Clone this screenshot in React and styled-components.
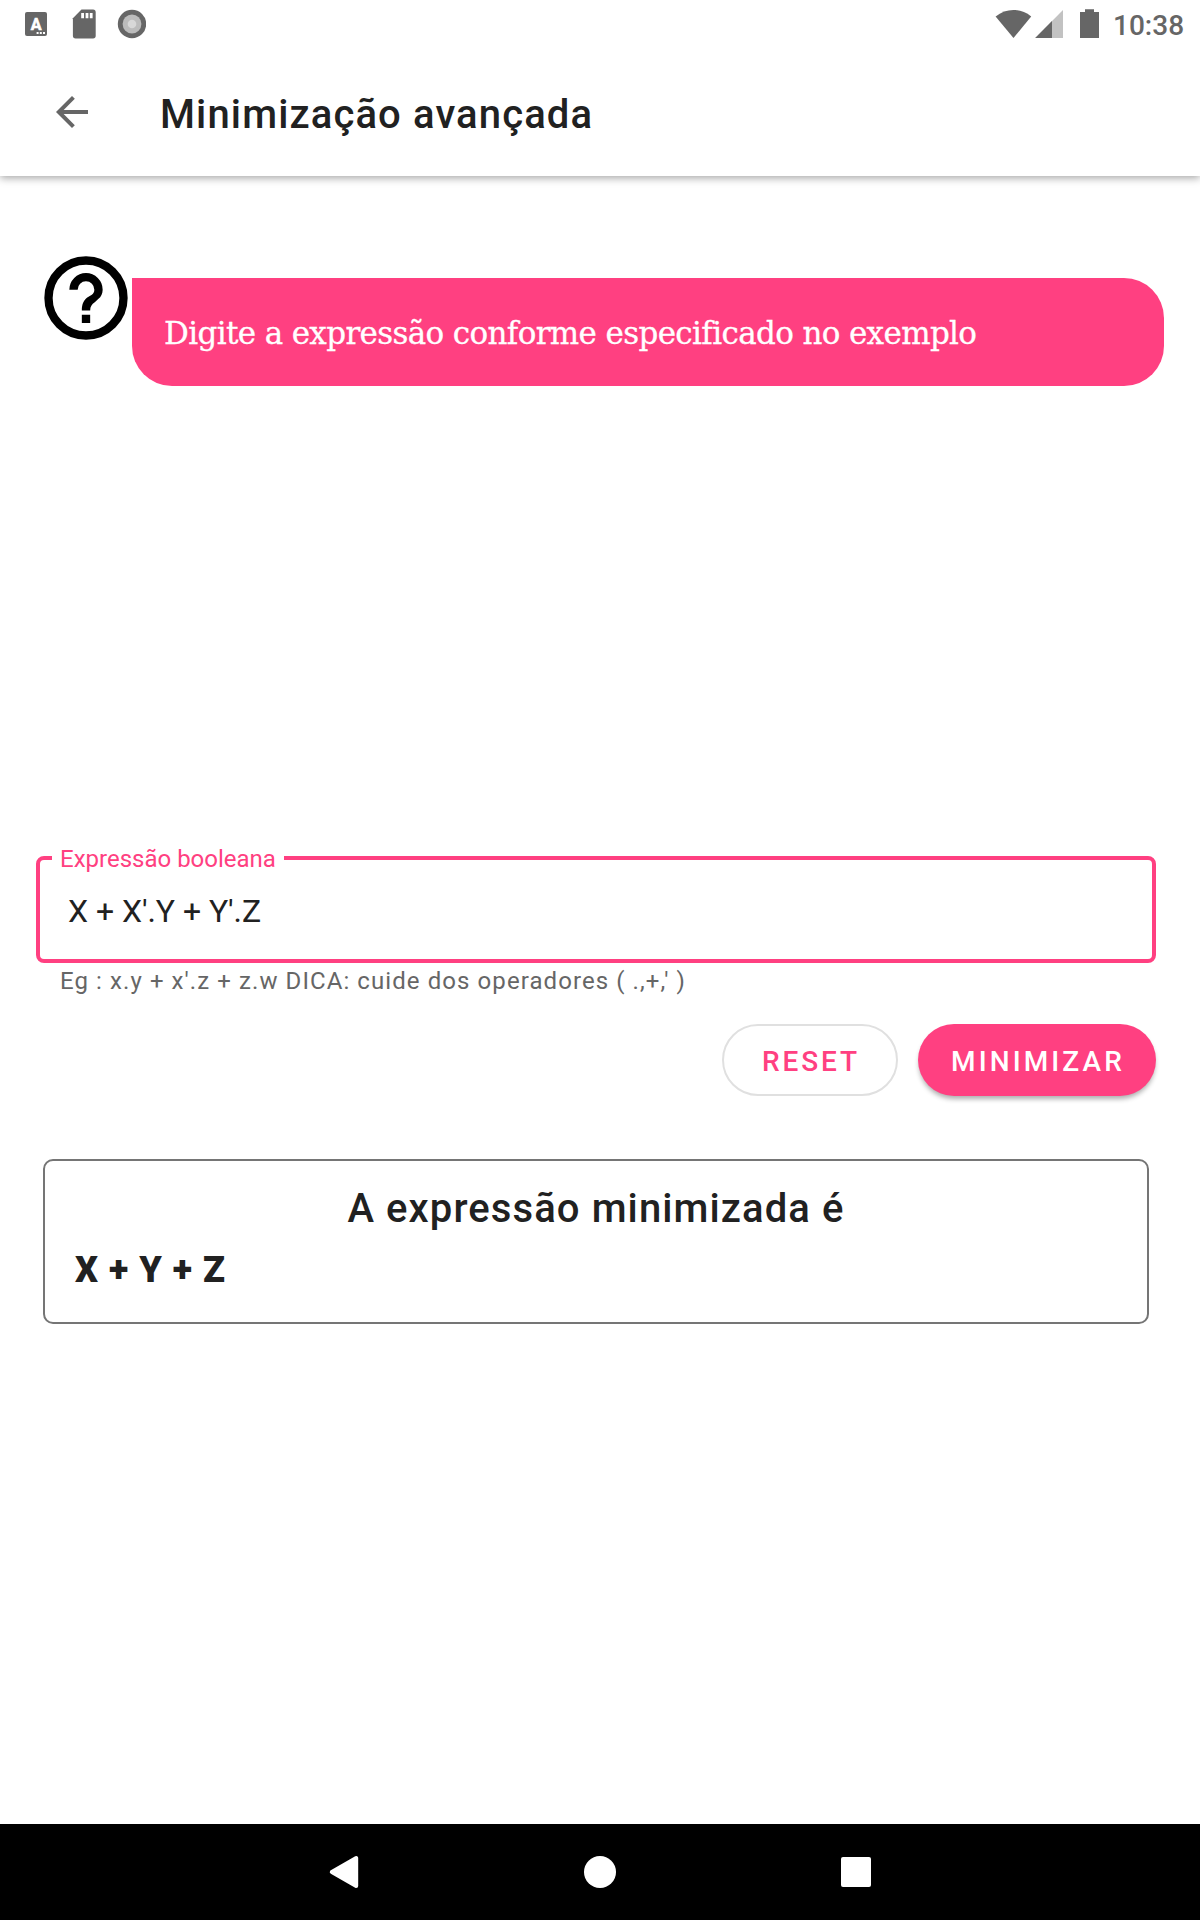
import React from "react";
import styled, { createGlobalStyle } from "styled-components";
import { MdArrowBack } from "react-icons/md";

function App() {
  return (
    <Screen>
      <GlobalStyle />
      <StatusBar />
      <Toolbar>
        <BackIcon />
        <Title>Minimização avançada</Title>
      </Toolbar>
      <Content>
        <HintRow>
          <HelpIcon viewBox="0 0 24 24">
            <circle cx="12" cy="12" r="9" fill="none" stroke="#000" strokeWidth="2" />
            <path d="M11 16h2v2h-2zM16 10c0 .9-.4 1.7-1 2.2l-.9.8c-.7.5-1.1 1-1.1 2h-2c0-1.600.5-2.500 1.300-3.100l1.100-.7c.4-.3.6-.7.6-1.200a2 2 0 0 0-4 0H8a4 4 0 0 1 8 0z" />
          </HelpIcon>
          <Bubble>
            <BubbleText>Digite a expressão conforme especificado no exemplo</BubbleText>
          </Bubble>
        </HintRow>
        <Field>
          <Label>Expressão booleana</Label>
          <Value>X + X'.Y + Y'.Z</Value>
        </Field>
        <Helper>Eg : x.y + x'.z + z.w DICA: cuide dos operadores ( .,+,' )</Helper>
        <Actions>
          <Button $width={176}>RESET</Button>
          <Button $width={238} $primary>
            MINIMIZAR
          </Button>
        </Actions>
        <ResultCard>
          <ResultTitle>A expressão minimizada é</ResultTitle>
          <Result>X + Y + Z</Result>
        </ResultCard>
      </Content>
      <NavBar>
        <svg width="32" height="36" viewBox="0 0 32 36">
          <path
            d="M28.2 4v28L3.8 18z"
            fill="#fff"
            stroke="#fff"
            strokeWidth="4"
            strokeLinejoin="round"
          />
        </svg>
        <svg width="32" height="32" viewBox="0 0 32 32">
          <circle cx="16" cy="16" r="16" fill="#fff" />
        </svg>
        <svg width="32" height="32" viewBox="0 0 32 32">
          <rect x="1" y="1" width="30" height="30" rx="2" fill="#fff" />
        </svg>
      </NavBar>
    </Screen>
  );
}

function StatusBar() {
  return (
    <Status>
      <svg width="122" height="48" viewBox="0 0 122 48" fill="#666">
        <rect x="1" y="12" width="22" height="24" rx="2" />
        <text
          x="12"
          y="29.6"
          fontSize="16"
          fontWeight="700"
          textAnchor="middle"
          fill="#fff"
          stroke="#fff"
          strokeWidth="0.6"
        >
          A
        </text>
        <path d="M12.6 32h2v2h-2zM15.8 32h2v2h-2zM19 32h2v2h-2z" fill="#fff" />
        <path d="M57.5 9.5H69a2.7 2.7 0 0 1 2.7 2.7v23.6a2.7 2.7 0 0 1-2.7 2.7H51.6a2.7 2.7 0 0 1-2.7-2.7V18.2z" />
        <path d="M57.2 13h2.8v5.2h-2.8zM61.6 13h2.8v5.2h-2.8zM65.8 13h2.8v5.2h-2.8z" fill="#fff" />
        <circle cx="108" cy="24" r="14.2" />
        <circle cx="108" cy="24" r="9.4" fill="#bcbcbc" />
        <circle cx="108" cy="24" r="4.3" fill="#d8d8d8" />
      </svg>
      <StatusRight>
        <svg width="106" height="48" viewBox="0 0 106 48" fill="#666">
          <path d="M1.6 16.4C7 12.2 13 10 19.4 10s12.4 2.2 17.8 6.4L19.5 38z" />
          <path d="M69 10v28H41.2z" fill="#c2c2c2" />
          <path d="M58 21.1V38H41.2z" />
          <path d="M91 9.2h9V12h5v26H86V12h5z" />
        </svg>
        <Clock>10:38</Clock>
      </StatusRight>
    </Status>
  );
}

const pink = "#ff4081";

const GlobalStyle = createGlobalStyle`
  * {
    box-sizing: border-box;
  }
  body {
    margin: 0;
    background: #fff;
    font-family: Roboto, sans-serif;
    color: #212121;
  }
  svg {
    display: block;
    flex: none;
  }
`;

const Screen = styled.div`
  display: flex;
  flex-direction: column;
  width: 1200px;
  height: 1920px;
  overflow: hidden;
`;

const Status = styled.div`
  display: flex;
  justify-content: space-between;
  height: 48px;
  padding: 0 17px 0 24px;
`;

const StatusRight = styled.div`
  display: flex;
  gap: 13px;
`;

const Clock = styled.span`
  width: 70px;
  padding-top: 1px;
  font-size: 28px;
  font-weight: 500;
  line-height: 49px;
  white-space: nowrap;
  color: #666;
`;

const Toolbar = styled.header`
  display: flex;
  align-items: center;
  height: 128px;
  padding-left: 48px;
  box-shadow: 0 2px 8px rgba(0, 0, 0, 0.36);
  clip-path: inset(0 0 -12px 0); // shadow only below the bar
`;

const BackIcon = styled(MdArrowBack)`
  width: 48px;
  height: 48px;
  color: #666;
`;

const Title = styled.h1`
  margin: 0 0 0 64px;
  padding-top: 5px;
  font-size: 40px;
  font-weight: 500;
  line-height: 49px;
  letter-spacing: 1.13px;
  white-space: nowrap;
`;

const Content = styled.main`
  display: flex;
  flex-direction: column;
  flex: 1;
  padding: 72px 44px 0 36px;
`;

const HintRow = styled.div`
  display: flex;
  width: 1128px;
  height: 138px;
`;

const HelpIcon = styled.svg`
  width: 100px;
  height: 100px;
  margin-right: -4px;
`;

const Bubble = styled.div`
  flex: 1;
  margin-top: 30px;
  padding: 32px 0 0 32px;
  border-radius: 0 40px 40px 40px;
  background: ${pink};
`;

const BubbleText = styled.p`
  margin: 0;
  font-family: "Roboto Slab", "DejaVu Serif", serif;
  font-size: 31px;
  line-height: 46px;
  letter-spacing: -0.65px;
  white-space: nowrap;
  color: #fff;
  -webkit-text-stroke: 0.3px #fff;
`;

const Field = styled.fieldset`
  height: 119px;
  margin: 458px 0 0;
  padding: 0 0 0 12px;
  border: 4px solid ${pink};
  border-radius: 8px;
`;

const Label = styled.legend`
  width: 232px;
  padding: 2px 0 0 8px;
  font-size: 24px;
  line-height: 26px;
  white-space: nowrap;
  color: ${pink};
`;

const Value = styled.div`
  padding: 17px 0 0 16px;
  font-size: 32px;
  line-height: 44px;
  letter-spacing: -0.05px;
  white-space: nowrap;
`;

const Helper = styled.div`
  margin-top: 4px;
  padding-left: 24px;
  font-size: 24px;
  line-height: 28px;
  letter-spacing: 1.08px;
  white-space: nowrap;
  color: #666;
`;

const Actions = styled.div`
  display: flex;
  justify-content: flex-end;
  gap: 20px;
  margin-top: 29px;
`;

const Button = styled.button`
  width: ${(props) => props.$width}px;
  height: 72px;
  padding: 3px 0 0 2px;
  border: ${(props) => (props.$primary ? "none" : "2px solid #e0e0e0")};
  border-radius: 36px;
  background: ${(props) => (props.$primary ? pink : "#fff")};
  box-shadow: ${(props) => (props.$primary ? "0 4px 5px -1px rgba(0, 0, 0, 0.32)" : "none")};
  color: ${(props) => (props.$primary ? "#fff" : pink)};
  font-family: inherit;
  font-size: 28px;
  font-weight: 500;
  line-height: 36px;
  letter-spacing: ${(props) => (props.$primary ? 3.1 : 2.9)}px;
`;

const ResultCard = styled.section`
  height: 165px;
  margin: 63px 7px 0;
  padding: 24px 30px 0;
  border: 2px solid #757575;
  border-radius: 10px;
`;

const ResultTitle = styled.h2`
  margin: 0;
  font-size: 40px;
  font-weight: 500;
  line-height: 48px;
  letter-spacing: 1.1px;
  text-align: center;
`;

const Result = styled.div`
  margin-top: 16px;
  font-size: 36px;
  font-weight: 900;
  line-height: 42px;
  letter-spacing: 1px;
  white-space: nowrap;
`;

const NavBar = styled.nav`
  display: flex;
  align-items: center;
  justify-content: center;
  gap: 224px;
  height: 96px;
  background: #000;
`;

export default App;
